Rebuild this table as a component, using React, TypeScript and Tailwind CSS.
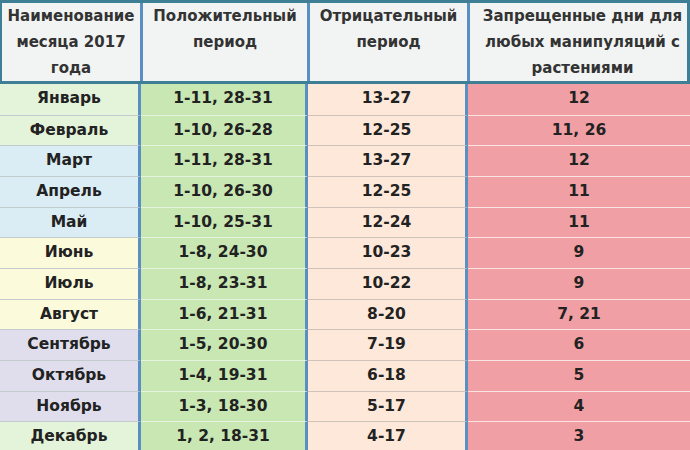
const rows = [
  { m: "Январь", p: "1-11, 28-31", n: "13-27", f: "12", c: "bg-[#e3f4da]" },
  { m: "Февраль", p: "1-10, 26-28", n: "12-25", f: "11, 26", c: "bg-[#e3f4da]" },
  { m: "Март", p: "1-11, 28-31", n: "13-27", f: "12", c: "bg-[#daedf4]" },
  { m: "Апрель", p: "1-10, 26-30", n: "12-25", f: "11", c: "bg-[#daedf4]" },
  { m: "Май", p: "1-10, 25-31", n: "12-24", f: "11", c: "bg-[#daedf4]" },
  { m: "Июнь", p: "1-8, 24-30", n: "10-23", f: "9", c: "bg-[#fbfbdb]" },
  { m: "Июль", p: "1-8, 23-31", n: "10-22", f: "9", c: "bg-[#fbfbdb]" },
  { m: "Август", p: "1-6, 21-31", n: "8-20", f: "7, 21", c: "bg-[#fbfbdb]" },
  { m: "Сентябрь", p: "1-5, 20-30", n: "7-19", f: "6", c: "bg-[#e0deec]" },
  { m: "Октябрь", p: "1-4, 19-31", n: "6-18", f: "5", c: "bg-[#e0deec]" },
  { m: "Ноябрь", p: "1-3, 18-30", n: "5-17", f: "4", c: "bg-[#e0deec]" },
  { m: "Декабрь", p: "1, 2, 18-31", n: "4-17", f: "3", c: "bg-[#e3f4da]" },
];

const cols = "grid grid-cols-[141px_167px_160px_222px]";

export default function App() {
  return (
    <div className="w-[690px] h-[450px] overflow-hidden bg-white font-['DejaVu_Sans',Verdana,sans-serif] font-bold text-[15px] text-[#222]">
      <div className={`${cols} h-[84px] bg-[#f2f3f3] border-t-[3px] border-b-[3px] border-l-[2px] border-r-[3px] border-[#3f7f95] text-center leading-[26px] text-[#333]`}>
        <div className="border-r-[3px] border-[#5a8fc4] -ml-[2px] pl-[2px]">
          Наименование<br />месяца 2017<br />года
        </div>
        <div className="border-r-[3px] border-[#5a8fc4]">
          Положительный<br />период
        </div>
        <div className="border-r-[3px] border-[#5a8fc4]">
          Отрицательный<br />период
        </div>
        <div className="-mr-[3px]">
          Запрещенные дни для<br />любых манипуляций с<br />растениями
        </div>
      </div>
      {rows.map((r, i) => (
        <div key={r.m} className={`${cols} h-[30.67px] text-center text-[15.5px] leading-[29px]`}>
          <div className={`${r.c} border-r-[3px] border-[#5a8fc4] ${i ? "border-t border-t-[#c3cbcf]" : ""}`}>{r.m}</div>
          <div className={`bg-[#c8e7b3] border-r-[3px] border-[#5a8fc4] ${i ? "border-t border-t-[#e6f3de]" : ""}`}>{r.p}</div>
          <div className={`bg-[#fde8da] border-r-[3px] border-[#5a8fc4] ${i ? "border-t border-t-[#cdc3bb]" : ""}`}>{r.n}</div>
          <div className={`bg-[#f0a0a4] ${i ? "border-t border-t-[#fbe3e4]" : ""}`}>{r.f}</div>
        </div>
      ))}
    </div>
  );
}
